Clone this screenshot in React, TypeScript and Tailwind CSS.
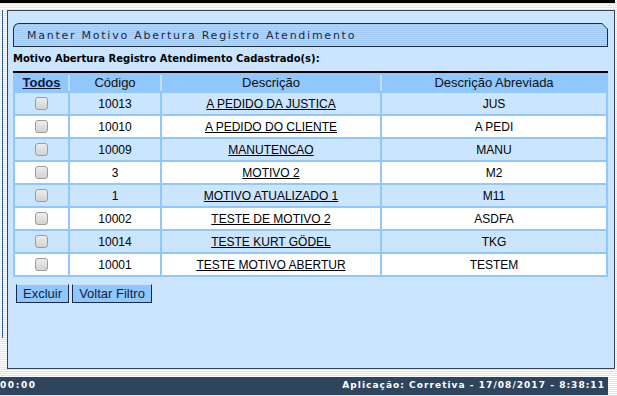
const rows = [
  { cod: "10013", desc: "A PEDIDO DA JUSTICA", abrev: "JUS" },
  { cod: "10010", desc: "A PEDIDO DO CLIENTE", abrev: "A PEDI" },
  { cod: "10009", desc: "MANUTENCAO", abrev: "MANU" },
  { cod: "3", desc: "MOTIVO 2", abrev: "M2" },
  { cod: "1", desc: "MOTIVO ATUALIZADO 1", abrev: "M11" },
  { cod: "10002", desc: "TESTE DE MOTIVO 2", abrev: "ASDFA" },
  { cod: "10014", desc: "TESTE KURT GÖDEL", abrev: "TKG" },
  { cod: "10001", desc: "TESTE MOTIVO ABERTUR", abrev: "TESTEM" },
];

// fake checkbox, the old gray look
function Check() {
  return <span className="block w-[13px] h-[13px] rounded-[3px] border border-[#9c9c9c] bg-gradient-to-b from-[#ededed] to-[#d2d2d2]" />;
}

export default function App() {
  return (
    <div className="w-[617px] h-[396px] overflow-hidden flex flex-col bg-[repeating-linear-gradient(to_bottom,#ffffff_0px,#ffffff_1px,#dde4ec_1px,#dde4ec_2px)] font-['Liberation_Sans',Arial,sans-serif]">
      <div className="h-[3px] w-[615px] bg-black shrink-0" />

      <div className="flex mt-[7px] shrink-0">
        {/* left frame edge */}
        <div className="w-[7px] shrink-0">
          <div className="ml-[2px] w-[1px] h-[328px] bg-[#2f5f9e]" />
        </div>

        {/* main panel */}
        <div className="w-[608px] h-[359px] border border-[#34455a] bg-[#cbe5fe] flex flex-col">
          <div className="ml-[5px] mt-[12px] w-[595px] h-[24px] p-[1px] bg-[#1d2d40] rounded-tl-[6px] [clip-path:polygon(0_0,calc(100%-6px)_0,100%_6px,100%_100%,0_100%)]">
            <div className="h-full rounded-tl-[5px] bg-[repeating-linear-gradient(to_bottom,#9fc8f2_0px,#9fc8f2_1px,#b7d7f8_1px,#b7d7f8_2px)] [clip-path:polygon(0_0,calc(100%-5px)_0,100%_5px,100%_100%,0_100%)] flex items-center pl-[13px]">
              <span className="font-['DejaVu_Sans',Verdana,sans-serif] text-[11px] tracking-[1.75px] text-[#1b2a48] leading-none">
                Manter Motivo Abertura Registro Atendimento
              </span>
            </div>
          </div>

          <div className="ml-[5px] mt-[6px] h-[12px] leading-[12px] font-['DejaVu_Sans',Verdana,sans-serif] font-bold text-[10px] text-black">
            Motivo Abertura Registro Atendimento Cadastrado(s):
          </div>

          <div className="ml-[5px] mt-[6px] w-[595px] h-[2px] bg-black" />

          <div className="ml-[5px] w-[595px] grid grid-cols-[53px_90px_218px_224px] gap-[2px] p-[2px] bg-[#90c7fc] text-[12px] text-black">
            <div className="h-[16px] flex items-center justify-center bg-[#90c7fc] shadow-[2px_0_0_#c2dffc] font-bold underline text-[13px] text-[#101838]">Todos</div>
            <div className="h-[16px] flex items-center justify-center bg-[#90c7fc] shadow-[2px_0_0_#c2dffc] text-[13px] text-[#111]">Código</div>
            <div className="h-[16px] flex items-center justify-center bg-[#90c7fc] shadow-[2px_0_0_#c2dffc] text-[13px] text-[#111]">Descrição</div>
            <div className="h-[16px] flex items-center justify-center bg-[#90c7fc] text-[13px] text-[#111]">Descrição Abreviada</div>

            {rows.map((r, i) => {
              const bg = i % 2 === 0 ? "bg-[#cbe5fe]" : "bg-white";
              return [
                <div key={r.cod + "a"} className={"h-[21px] flex items-center justify-center " + bg}><Check /></div>,
                <div key={r.cod + "b"} className={"h-[21px] flex items-center justify-center " + bg}>{r.cod}</div>,
                <div key={r.cod + "c"} className={"h-[21px] flex items-center justify-center underline " + bg}>{r.desc}</div>,
                <div key={r.cod + "d"} className={"h-[21px] flex items-center justify-center " + bg}>{r.abrev}</div>,
              ];
            })}
          </div>

          <div className="ml-[8px] mt-[7px] flex gap-[3px]">
            <button className="w-[53px] h-[19px] bg-[#90c7fc] border border-[#1a2a48] border-t-[#c9e3fd] text-[13px] leading-none text-[#0f1f3f]">Excluir</button>
            <button className="w-[80px] h-[19px] bg-[#90c7fc] border border-[#1a2a48] border-t-[#c9e3fd] text-[13px] leading-none text-[#0f1f3f]">Voltar Filtro</button>
          </div>
        </div>
      </div>

      {/* status bar */}
      <div className="mt-[8px] w-[608px] h-[18px] shrink-0 bg-[#2f455d] flex items-center justify-between pr-[3px] font-['DejaVu_Sans',Verdana,sans-serif] font-bold text-[9px] tracking-[1.05px] text-white">
        <span className="tracking-[1.6px]">00:00</span>
        <span>Aplicação: Corretiva - 17/08/2017 - 8:38:11</span>
      </div>
    </div>
  );
}
